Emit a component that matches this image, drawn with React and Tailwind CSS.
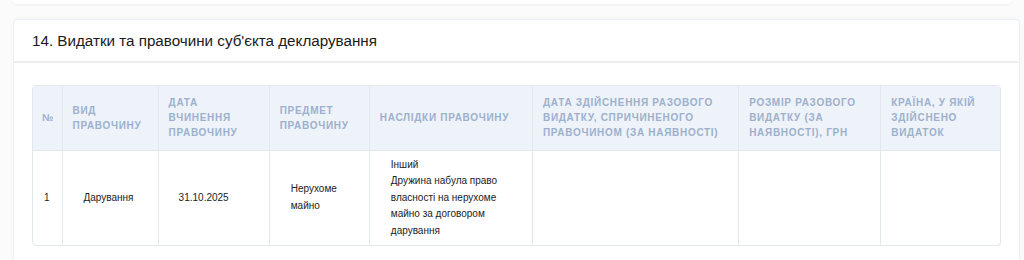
import React from "react";

const columns = [
  { title: "№", width: 29 },
  { title: "Вид правочину", width: 96 },
  { title: "Дата вчинення правочину", width: 111 },
  { title: "Предмет правочину", width: 100 },
  { title: "Наслідки правочину", width: 163 },
  { title: "Дата здійснення разового видатку, спричиненого правочином (за наявності)", width: 206 },
  { title: "Розмір разового видатку (за наявності), грн", width: 142 },
  { title: "Країна, у якій здійснено видаток", width: 119 },
];

const rows = [
  {
    id: 1,
    type: "Дарування",
    date: "31.10.2025",
    subject: "Нерухоме майно",
    result: ["Інший", "Дружина набула право власності на нерухоме майно за договором дарування"],
    spendDate: "",
    amount: "",
    country: "",
  },
];

const App = () => {
  return (
    <div
      className="w-[1024px] h-[260px] overflow-hidden bg-[#fbfbfc]"
      style={{ fontFamily: '"Liberation Sans", Arial, sans-serif' }}
    >
      <div className="h-[4px] mx-[13px] bg-white shadow-[0_1px_3px_rgba(0,0,0,0.06)] rounded-b"></div>
      <div className="mt-[15px] ml-[13px] w-[1007px] bg-white border border-[#eaf0f6] rounded-[4px] shadow-[0_0_4px_rgba(0,0,0,0.03)]">
        <div className="h-[43px] px-[18px] flex items-center border-b-2 border-[#eeeeee]">
          <h2 className="text-[15.2px] text-[#1a1a1a] pt-[1px]">
            14. Видатки та правочини суб'єкта декларування
          </h2>
        </div>
        <div className="pt-[22px] px-[18px] pb-[20px]">
          <div className="border border-[#e3e8ee] rounded-[4px] overflow-hidden">
            <table className="w-full table-fixed border-collapse">
              <colgroup>
                {columns.map((c) => (
                  <col key={c.title} style={{ width: c.width }} />
                ))}
              </colgroup>
              <thead>
                <tr className="h-[64px] bg-[#eef3f9]">
                  {columns.map((c, i) => (
                    <th
                      key={c.title}
                      className={
                        "text-left align-middle font-bold uppercase text-[10px] leading-[15px] tracking-[0.7px] text-[#9db0cd] border-b border-[#e3e8ee] " +
                        (i === 0 ? "pl-[9px] pr-[4px] " : "px-[10px] ") +
                        (i > 0 ? "border-l border-[#e3e8ee]" : "")
                      }
                    >
                      {c.title}
                    </th>
                  ))}
                </tr>
              </thead>
              <tbody>
                {rows.map((r) => (
                  <tr key={r.id} className="h-[95px] text-[10px] leading-[16.5px] text-[#222222]">
                    <td className="pl-[11px] align-middle">{r.id}</td>
                    <td className="pl-[21px] pr-[6px] align-middle border-l border-[#e3e8ee]">{r.type}</td>
                    <td className="pl-[20px] pr-[6px] align-middle border-l border-[#e3e8ee]">{r.date}</td>
                    <td className="pl-[21px] pr-[30px] align-middle border-l border-[#e3e8ee]">{r.subject}</td>
                    <td className="pl-[21px] pr-[24px] align-middle border-l border-[#e3e8ee]">
                      {r.result.map((line) => (
                        <div key={line}>{line}</div>
                      ))}
                    </td>
                    <td className="px-[20px] align-middle border-l border-[#e3e8ee]">{r.spendDate}</td>
                    <td className="px-[20px] align-middle border-l border-[#e3e8ee]">{r.amount}</td>
                    <td className="px-[20px] align-middle border-l border-[#e3e8ee]">{r.country}</td>
                  </tr>
                ))}
              </tbody>
            </table>
          </div>
        </div>
      </div>
    </div>
  );
};

export default App;
